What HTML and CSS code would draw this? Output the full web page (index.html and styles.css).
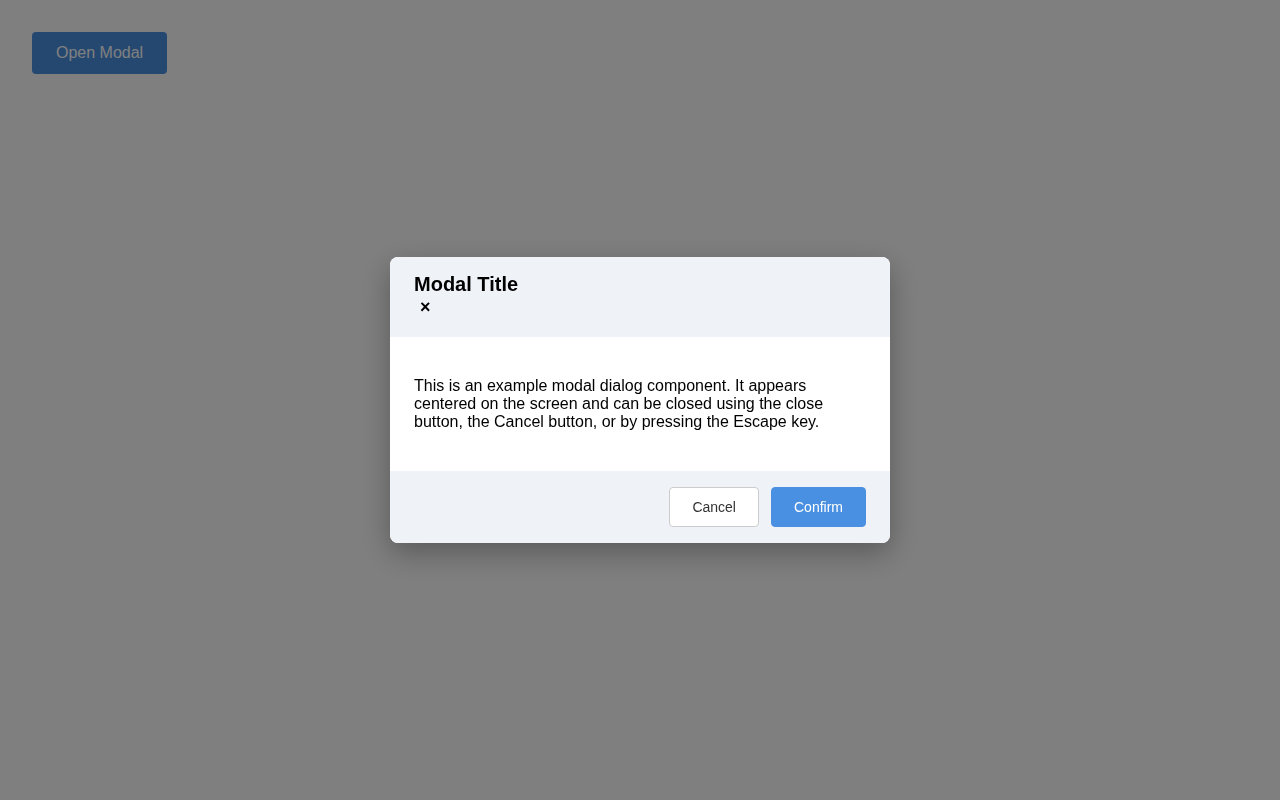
FILE: index.html
```html
<!DOCTYPE html>
<html lang="en">
<head>
<meta charset="utf-8">
<title>Modal</title>
<link rel="stylesheet" href="styles.css">
</head>
<body>
<div class="page">
  <button class="open-btn">Open Modal</button>
</div>
<div class="overlay">
  <div class="modal" role="dialog" aria-labelledby="mt">
    <div class="modal-header">
      <h2 class="modal-title" id="mt">Modal Title</h2>
      <button class="close-btn" aria-label="Close">×</button>
    </div>
    <div class="modal-body">
      <p>This is an example modal dialog component. It appears centered on the screen and can be closed using the close button, the Cancel button, or by pressing the Escape key.</p>
    </div>
    <div class="modal-footer">
      <button class="btn btn-cancel">Cancel</button>
      <button class="btn btn-confirm">Confirm</button>
    </div>
  </div>
</div>
</body>
</html>
```

FILE: styles.css
```css
* { box-sizing: border-box; }
html, body { margin: 0; height: 100%; }
body {
  font-family: "Liberation Sans", Arial, sans-serif;
  background: #ffffff;
  color: #000;
}
.page { padding: 32px; }
.open-btn {
  font-family: inherit;
  font-size: 16px;
  line-height: 18px;
  padding: 12px 24px;
  background: #4a90e2;
  color: #fff;
  border: none;
  border-radius: 4px;
}
.overlay {
  position: fixed;
  inset: 0;
  background: rgba(0, 0, 0, 0.5);
  display: flex;
  align-items: center;
  justify-content: center;
}
.modal {
  width: 500px;
  background: #fff;
  border-radius: 8px;
  overflow: hidden;
  box-shadow: 0 10px 30px rgba(0, 0, 0, 0.3);
}
.modal-header {
  background: #eff2f7;
  padding: 16px 24px 19px;
}
.modal-title {
  margin: 0;
  font-size: 20px;
  line-height: 23px;
  font-weight: bold;
}
.close-btn {
  display: block;
  font-family: inherit;
  font-size: 18px;
  font-weight: bold;
  line-height: 22px;
  padding: 0 6px;
  background: none;
  border: none;
  color: #000;
}
.modal-body { padding: 24px; }
.modal-body p {
  margin: 16px 0;
  font-size: 16px;
  line-height: 18px;
}
.modal-footer {
  background: #eff2f7;
  padding: 16px 24px;
  display: flex;
  justify-content: flex-end;
  gap: 12px;
}
.btn {
  font-family: inherit;
  font-size: 14px;
  height: 40px;
  padding: 0 22px;
  border-radius: 4px;
}
.btn-cancel {
  background: #fff;
  border: 1px solid #cccccc;
  color: #333;
}
.btn-confirm {
  background: #4a90e2;
  border: 1px solid #4a90e2;
  color: #fff;
}
```
